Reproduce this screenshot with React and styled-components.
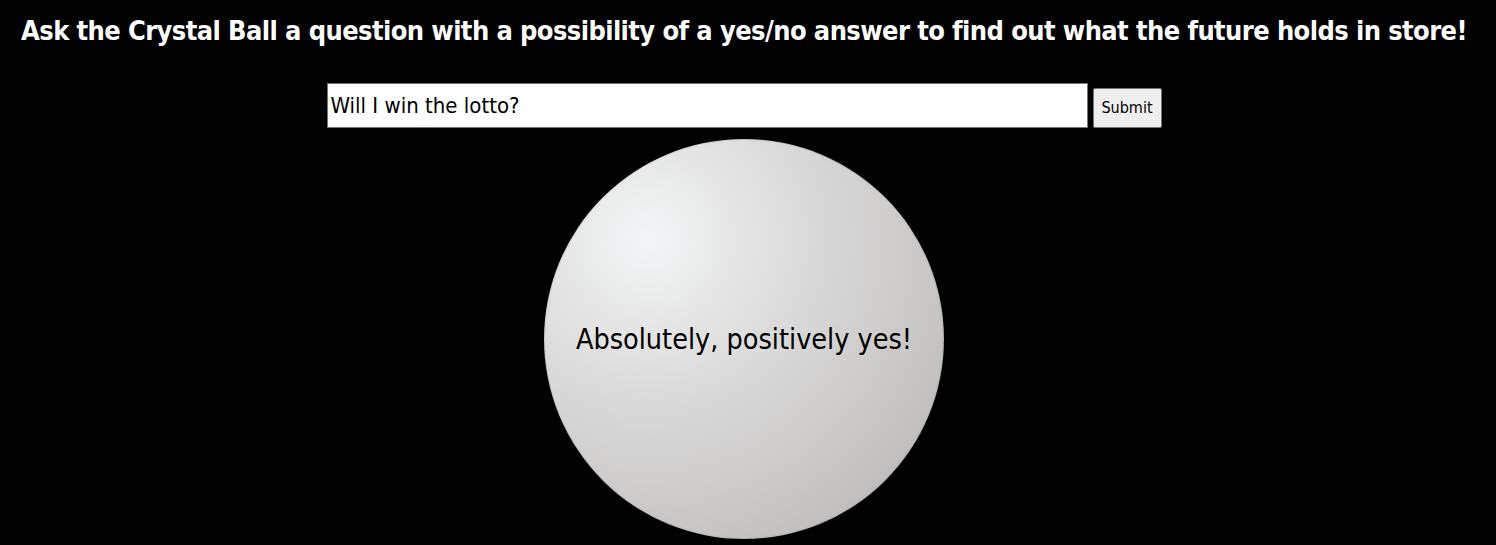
import React, { useState } from 'react';
import styled, { createGlobalStyle } from 'styled-components';

const GlobalStyle = createGlobalStyle`
body {
  margin: 0;
  background: #000;
  font-family: "DejaVu Sans Condensed", "Liberation Sans", sans-serif;
}
`

function App() {
  const [question, setQuestion] = useState('Will I win the lotto?');

  return (
    <Page>
      <GlobalStyle />
      <Title>Ask the Crystal Ball a question with a possibility of a yes/no answer to find out what the future holds in store!</Title>
      <Form onSubmit={(e) => e.preventDefault()}>
        <QuestionInput value={question} onChange={(e) => setQuestion(e.target.value)} />
        <SubmitButton type='submit'>Submit</SubmitButton>
      </Form>
      <Ball>
        <Answer>Absolutely, positively yes!</Answer>
      </Ball>
    </Page>
  )
}

export default App

const Page = styled.div`
display: flex;
flex-direction: column;
align-items: center;
padding-right: 8px;
color: #fff;
`

const Title = styled.h1`
margin: 13px 0 0;
font-size: 27px;
font-weight: 600;
letter-spacing: -0.6px;
line-height: 36px;
text-align: center;
white-space: nowrap;
`

const Form = styled.form`
display: flex;
align-items: center;
gap: 5px;
margin-top: 34px;
`

const QuestionInput = styled.input`
box-sizing: border-box;
width: 761px;
height: 45px;
padding: 0 3px;
border: 1px solid #767676;
font-family: inherit;
font-size: 22px;
color: #000;
background: #fff;
outline: none;
`

const SubmitButton = styled.button`
box-sizing: border-box;
width: 69px;
height: 40px;
margin-top: 4px;
padding: 0;
border: 1px solid #767676;
border-radius: 2px;
background: #efefef;
font-family: inherit;
font-size: 16px;
color: #000;
`

const Ball = styled.div`
display: flex;
align-items: center;
justify-content: center;
width: 400px;
height: 400px;
margin-top: 11px;
border-radius: 50%;
background: radial-gradient(circle at 26% 25%, #f4f5f6 0%, #dcdcdc 35%, #c8c6c5 70%, #b3b1ae 100%);
box-shadow: inset 0 0 2px rgba(0,0,0,0.3);
`

const Answer = styled.p`
margin: 0;
font-size: 28.5px;
color: #000;
`
